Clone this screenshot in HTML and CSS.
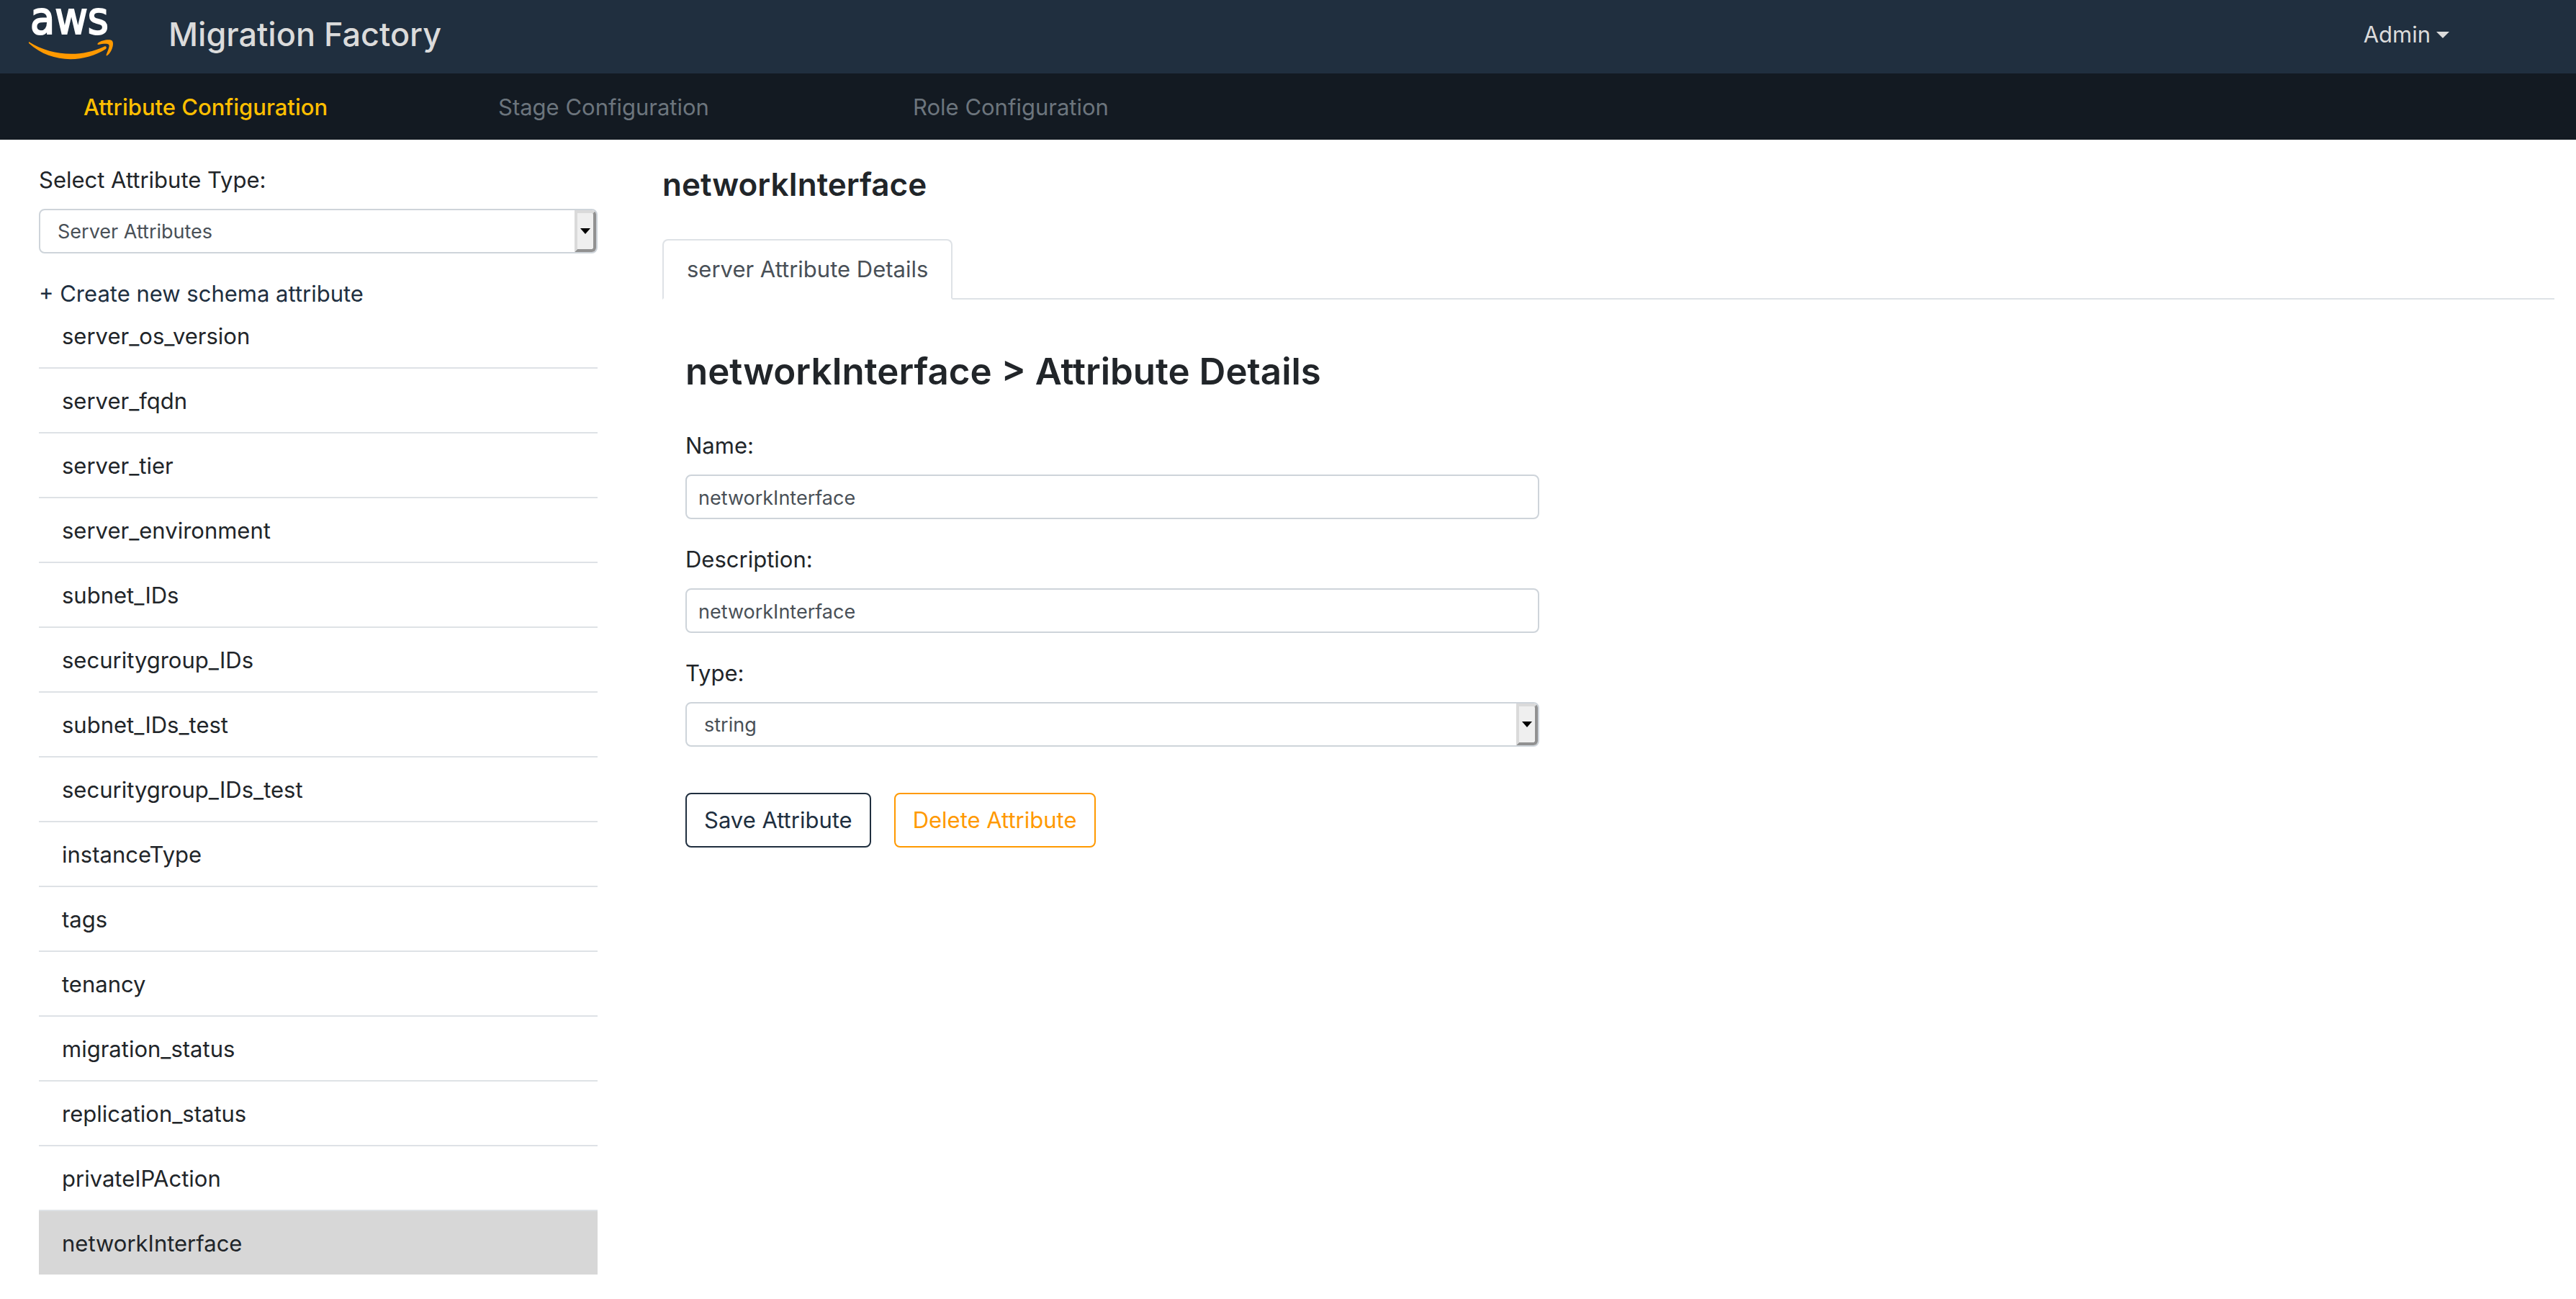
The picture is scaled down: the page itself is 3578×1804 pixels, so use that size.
FILE: index.html
```html
<!DOCTYPE html>
<html lang="en">
<head>
<meta charset="utf-8">
<title>Migration Factory</title>
<link rel="stylesheet" href="styles.css">
</head>
<body>
<header class="topbar">
  <a class="brand" href="#">
    <svg class="logo" viewBox="0 0 120 96" role="img" aria-label="aws">
      <text class="logo-text" x="2" y="47">aws</text>
      <path fill="#ff9900" d="M0 58 C32 78 72 80 104 65 C107 63 109 66 107 68 C76 88 30 88 0 60 Z"/>
      <path fill="#ff9900" d="M96 60 C101 55 115 54 116 57 C119 61 115 73 109 77 C108 78 107 77 108 75 C110 70 113 63 111 62 C109 60 102 61 97 62 C95 62 95 61 96 60 Z"/>
    </svg>
    <span class="title">Migration Factory</span>
  </a>
  <button class="user" type="button">Admin<span class="caret"></span></button>
</header>
<nav class="subnav">
  <a class="subnav-link active" href="#">Attribute Configuration</a>
  <a class="subnav-link" href="#">Stage Configuration</a>
  <a class="subnav-link" href="#">Role Configuration</a>
</nav>
<main class="page">
  <aside class="sidebar">
    <div class="field">
      <label for="schema">Select Attribute Type:</label>
      <div class="select"><select id="schema"><option>Server Attributes</option></select><span class="arrow"></span></div>
    </div>
    <a class="create" href="#">+ Create new schema attribute</a>
    <ul class="list">
      <li>server_os_version</li>
      <li>server_fqdn</li>
      <li>server_tier</li>
      <li>server_environment</li>
      <li>subnet_IDs</li>
      <li>securitygroup_IDs</li>
      <li>subnet_IDs_test</li>
      <li>securitygroup_IDs_test</li>
      <li>instanceType</li>
      <li>tags</li>
      <li>tenancy</li>
      <li>migration_status</li>
      <li>replication_status</li>
      <li>privateIPAction</li>
      <li class="selected">networkInterface</li>
    </ul>
  </aside>
  <section class="content">
    <h1 class="heading">networkInterface</h1>
    <div class="tabs"><a class="tab" href="#">server Attribute Details</a></div>
    <form class="details">
      <h2 class="subheading">networkInterface &gt; Attribute Details</h2>
      <div class="field">
        <label for="name">Name:</label>
        <input id="name" type="text" value="networkInterface">
      </div>
      <div class="field">
        <label for="description">Description:</label>
        <input id="description" type="text" value="networkInterface">
      </div>
      <div class="field">
        <label for="type">Type:</label>
        <div class="select"><select id="type"><option>string</option></select><span class="arrow"></span></div>
      </div>
      <div class="actions">
        <button class="btn" type="button">Save Attribute</button>
        <button class="btn btn-delete" type="button">Delete Attribute</button>
      </div>
    </form>
  </section>
</main>
</body>
</html>
```
FILE: styles.css
```css
* { box-sizing: border-box; }

body {
  margin: 0;
  background: #fff;
  color: #212529;
  font: 31px/48px Inter, "Liberation Sans", sans-serif;
}

a { color: inherit; text-decoration: none; }
button, input, select { font: inherit; color: inherit; }

.topbar {
  display: flex;
  align-items: center;
  justify-content: space-between;
  height: 102px;
  padding: 0 176px 6px 40px;
  background: #202f3f;
  color: #dbdbdb;
}
.brand { display: flex; align-items: center; gap: 74px; }
.logo { width: 120px; height: 96px; overflow: visible; }
.logo-text {
  fill: #fff;
  stroke: #fff;
  stroke-width: 2px;
  font: 62px "DejaVu Sans Condensed", "Open Sans", sans-serif;
}
.title { font-size: 45px; font-weight: 500; }
.user {
  display: flex;
  align-items: center;
  gap: 8px;
  padding: 0;
  border: 0;
  background: none;
}
.caret {
  border: 9px solid transparent;
  border-top-color: #dbdbdb;
  border-bottom: 0;
}

.subnav {
  display: flex;
  padding: 23px 116px 21px;
  background: #131a22;
  color: #6c757d;
}
.subnav-link { width: 576px; }
.subnav-link.active { color: #ffbf00; font-weight: 500; }

.page { display: flex; gap: 90px; padding: 32px 30px 32px 54px; }
.sidebar { flex: none; width: 776px; }
.content { flex: 1; padding-top: 2px; }

.field { display: flex; flex-direction: column; gap: 16px; margin-bottom: 32px; }
.field input, .field select {
  width: 100%;
  height: 62px;
  padding: 2px 16px 0;
  border: 2px solid #ced4da;
  border-radius: 8px;
  background: #fff;
  color: #495057;
  font-size: 27px;
}
.select { position: relative; display: flex; }
.field select { appearance: none; padding: 2px 24px 0; }
.arrow {
  position: absolute;
  top: 2px;
  right: 2px;
  bottom: 2px;
  display: flex;
  align-items: center;
  justify-content: center;
  width: 30px;
  border: 4px solid;
  border-color: #dadada #919191 #919191 #dadada;
  border-radius: 0 6px 6px 0;
  background: #efefef;
  pointer-events: none;
}
.arrow::after {
  content: "";
  border: 7px solid transparent;
  border-top: 8px solid #000;
  border-bottom: 0;
}

.create { display: block; color: #202f3f; }
.list { margin: 0; padding: 0; list-style: none; }
.list li { height: 90px; padding: 21px 32px; border-top: 2px solid #dee2e6; }
.list li:first-child { height: 78px; padding-top: 11px; border-top: 0; }
.list .selected { background: #d7d7d7; }

.heading { margin: 0 0 48px; font-size: 44px; line-height: 56px; font-weight: 600; }
.tabs { display: flex; border-bottom: 2px solid #dee2e6; }
.tab {
  margin-bottom: -2px;
  padding: 16px 32px;
  border: 2px solid #dee2e6;
  border-bottom-color: #fff;
  border-radius: 8px 8px 0 0;
  color: #495057;
}
.details { width: 1218px; padding: 66px 0 0 32px; }
.subheading { margin: 0 0 45px; font-size: 51px; line-height: 68px; font-weight: 600; white-space: nowrap; }
.actions { display: flex; gap: 32px; padding-top: 32px; }
.btn {
  height: 76px;
  padding: 0 24px;
  border: 2px solid #202f3f;
  border-radius: 8px;
  background: #fff;
  color: #202f3f;
}
.btn-delete { border-color: #ff9900; color: #ff9900; }
```
